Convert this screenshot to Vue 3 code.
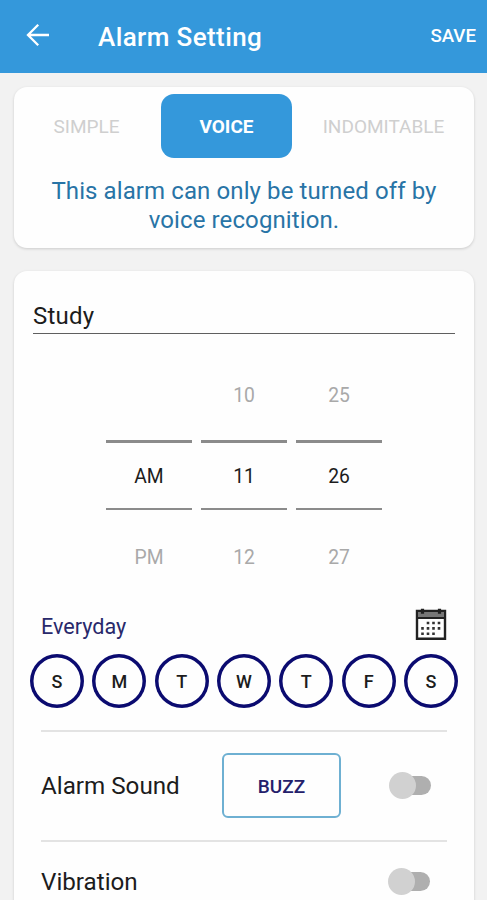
<script setup>
import { ref } from 'vue'

const tabs = ['SIMPLE', 'VOICE', 'INDOMITABLE']
const activeTab = ref('VOICE')
const title = ref('Study')
const wheels = [
  { name: 'period', values: ['', 'AM', 'PM'] },
  { name: 'hour', values: ['10', '11', '12'] },
  { name: 'minute', values: ['25', '26', '27'] },
]
const days = ['S', 'M', 'T', 'W', 'T', 'F', 'S']
</script>

<template>
  <div class="screen">
    <header class="bar">
      <svg class="back" viewBox="0 0 24 24" width="24" height="24">
        <path d="M12.2 1.8 2 12l10.2 10.2M2.4 12H23" fill="none" stroke="#fff" stroke-width="2.3" />
      </svg>
      <h1 class="heading"><span>Alarm Setting</span></h1>
      <span class="save">SAVE</span>
    </header>

    <section class="card mode">
      <nav class="tabs">
        <span
          v-for="tab in tabs"
          :key="tab"
          class="tab"
          :class="{ active: tab === activeTab }"
          @click="activeTab = tab"
        >{{ tab }}</span>
      </nav>
      <p class="hint">This alarm can only be turned off by<br />voice recognition.</p>
    </section>

    <section class="card settings">
      <div class="field"><span>{{ title }}</span></div>

      <div class="picker">
        <div v-for="wheel in wheels" :key="wheel.name" class="wheel">
          <span class="faded">{{ wheel.values[0] }}</span>
          <span class="current">{{ wheel.values[1] }}</span>
          <span class="faded">{{ wheel.values[2] }}</span>
        </div>
      </div>

      <div class="repeat">
        <span class="everyday">Everyday</span>
        <svg class="calendar" viewBox="0 0 32 32" width="32" height="32">
          <path d="M2 3h28v27.8H2z" fill="#fff" stroke="#222" stroke-width="2.4" />
          <path d="M3 4h26v6H3z" fill="#777" />
          <path d="M1 3h30M2 10h28" stroke="#222" stroke-width="2" />
          <path d="M7.5 .8v5M24.5 .8v5" stroke="#222" stroke-width="3.2" />
          <path
            d="M11.7 15h2.6M17.2 15h2.6M22.7 15h2.6M6.2 20.4h2.6M11.7 20.4h2.6M17.2 20.4h2.6M22.7 20.4h2.6M6.2 25.8h2.6M11.7 25.8h2.6M17.2 25.8h2.6"
            stroke="#333"
            stroke-width="2.6"
          />
        </svg>
      </div>

      <div class="days">
        <span v-for="(day, i) in days" :key="i" class="day">{{ day }}</span>
      </div>

      <div class="row sound">
        <span class="label">Alarm Sound</span>
        <span class="buzz">BUZZ</span>
        <span class="switch"><i class="thumb"></i></span>
      </div>

      <div class="row vibration">
        <span class="label">Vibration</span>
        <span class="switch"><i class="thumb"></i></span>
      </div>
    </section>
  </div>
</template>

<style>
body {
  margin: 0;
  background: #f2f2f2;
}
</style>

<style scoped>
.screen {
  box-sizing: border-box;
  width: 487px;
  height: 900px;
  overflow: hidden;
  background: #f2f2f2;
  font-family: Roboto, "Liberation Sans", sans-serif;
  color: #1c1c1c;
}
.bar {
  display: flex;
  align-items: center;
  box-sizing: border-box;
  height: 73px;
  padding: 0 11px 0 26px;
  background: #3498db;
  color: #fff;
}
.back {
  flex: none;
  margin-top: -3px;
}
.heading {
  flex: 1;
  margin: 0 0 0 48px;
  font-size: 26px;
  line-height: 30px;
  font-weight: 500;
  letter-spacing: 0.4px;
}
.save {
  padding-bottom: 1px;
  font-size: 18.7px;
  font-weight: 500;
}
.card {
  box-sizing: border-box;
  margin: 0 13px 0 14px;
  border-radius: 13px;
  background: #fefefe;
  box-shadow: 0 1px 3px rgba(0, 0, 0, 0.16);
}
.mode {
  height: 161px;
  margin-top: 14px;
  padding-top: 7px;
}
.tabs {
  display: grid;
  grid-template-columns: 131px 131px 165px;
  column-gap: 9px;
  height: 64px;
  margin-left: 7px;
}
.tab {
  display: flex;
  align-items: center;
  justify-content: center;
  box-sizing: border-box;
  border-radius: 13px;
  font-size: 19px;
  font-weight: 400;
  color: #cfcfcf;
}
.tab.active {
  background: #3498db;
  color: #fff;
  font-weight: 700;
}
.hint {
  margin: 19px 0 0;
  font-size: 24px;
  line-height: 28.5px;
  letter-spacing: 0.1px;
  text-align: center;
  color: #2874a6;
}
.settings {
  height: 660px;
  margin-top: 23px;
  padding: 28px 16px 0 19px;
}
.field {
  box-sizing: border-box;
  height: 35px;
  width: 422px;
  padding-top: 2px;
  border-bottom: 1px solid #5f5f5f;
  font-size: 24px;
  line-height: 30px;
  letter-spacing: 0.2px;
}
.picker {
  display: grid;
  grid-template-columns: repeat(3, 86px);
  column-gap: 9px;
  margin: 21px 0 0 73px;
}
.wheel {
  display: grid;
  grid-template-rows: 85px 70px 86px;
  text-align: center;
  font-size: 19.3px;
}
.wheel span {
  display: flex;
  align-items: center;
  justify-content: center;
}
.faded {
  color: #a9a9a9;
}
.faded:first-child {
  padding-bottom: 4px;
}
.faded:last-child {
  padding-top: 8px;
}
.current {
  padding-top: 2px;
  border-top: 3px solid #8b8b8b;
  border-bottom: 2px solid #8b8b8b;
}
.repeat {
  display: flex;
  align-items: center;
  justify-content: space-between;
  height: 34px;
  margin: 12px 11px 0 8px;
}
.everyday {
  padding-top: 2px;
  font-size: 21.6px;
  color: #29296b;
}
.calendar {
  flex: none;
  margin-top: -2px;
}
.days {
  display: flex;
  justify-content: space-between;
  width: 428px;
  margin: 12px 0 0 -3px;
}
.day {
  display: flex;
  align-items: center;
  justify-content: center;
  width: 54px;
  height: 54px;
  border-radius: 50%;
  box-shadow: inset 0 0 0 3.5px #0b0b70;
  font-size: 18px;
  font-weight: 500;
}
.row {
  display: flex;
  align-items: center;
  box-sizing: border-box;
  width: 406px;
  margin-left: 8px;
  border-top: 2px solid #e3e3e3;
}
.label {
  font-size: 24.2px;
}
.sound {
  height: 110px;
  margin-top: 22px;
  padding: 0 16px 1px 0;
}
.sound .label {
  width: 181px;
}
.vibration {
  height: 81px;
  padding-right: 17px;
}
.buzz {
  display: flex;
  align-items: center;
  justify-content: center;
  box-sizing: border-box;
  width: 119px;
  height: 65px;
  padding-top: 2px;
  border: 2px solid #6eb0d2;
  border-radius: 6px;
  font-size: 19px;
  font-weight: 500;
  color: #24206b;
}
.switch {
  display: flex;
  align-items: center;
  width: 40px;
  height: 19px;
  margin-left: auto;
  border-radius: 10px;
  background: #afafaf;
}
.thumb {
  flex: none;
  width: 27px;
  height: 27px;
  margin-left: -2px;
  border-radius: 50%;
  background: #d1d1d1;
}
</style>
